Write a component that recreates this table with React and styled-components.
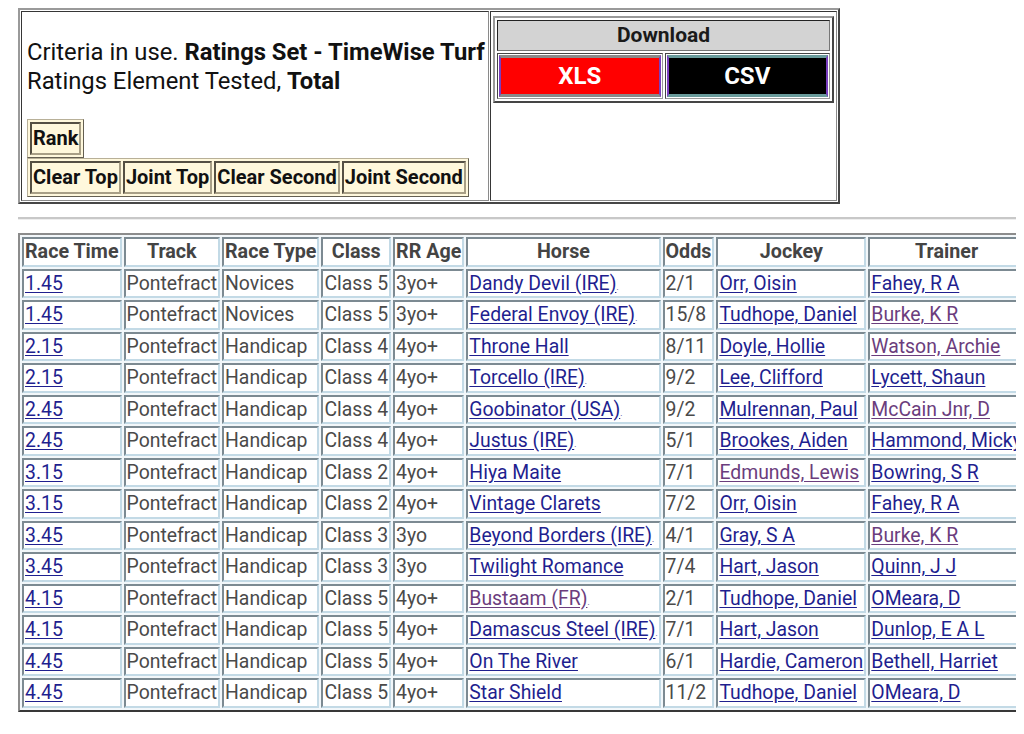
import React from "react";
import styled, { createGlobalStyle } from "styled-components";

const GlobalStyle = createGlobalStyle`
  html { overflow: hidden; }
  body {
    margin: 8px;
    background: #ffffff;
    font-family: Roboto, "Liberation Sans", sans-serif;
    font-size: 20px;
    color: #222;
  }
`;

const Page = styled.div`
  padding-left: 10px;
`;

const TopTable = styled.table`
  border: 2px outset #9a9a9a;
  border-spacing: 1px;
  width: 822px;
`;

const TopCell = styled.td`
  border: 1px inset #8a8a8a;
  vertical-align: top;
  padding: ${(p) => p.$pad || "0"};
  width: ${(p) => p.$w || "auto"};
  height: 190px;
  box-sizing: border-box;
`;

const Criteria = styled.div`
  font-size: 23.8px;
  line-height: 29px;
  white-space: nowrap;
  color: #111;
  padding-top: 26px;
  padding-bottom: 23px;
`;

const BtnTable = styled.table`
  border: 1px outset #b8b098;
  border-spacing: 2px;
  background: #fff8dc;
`;

const BtnCell = styled.td`
  border: 2px inset #a89f86;
  background: #fff8dc;
  font-weight: 700;
  color: #111;
  padding: 3px 1px;
  white-space: nowrap;
  line-height: 23px;
`;

const DlTable = styled.table`
  border: 2px outset #999;
  border-spacing: 2px;
  width: 100%;
  margin: 2px 0 0 0;
`;

const DlHead = styled.td`
  background: #d3d3d3;
  border: 1px inset #777;
  text-align: center;
  font-weight: 700;
  font-size: 21px;
  color: #1a1a1a;
  line-height: 29px;
  padding: 0;
`;

const DlCellWrap = styled.td`
  border: 1px inset #999;
  padding: 1px;
  width: 50%;
`;

const DlButton = styled.div`
  background: ${(p) => p.$bg};
  color: #ffffff;
  font-weight: 700;
  font-size: 24px;
  text-align: center;
  line-height: 36px;
  border-style: solid;
  border-width: 3px 2px;
  border-color: ${(p) => p.$edge} #7a3fbf;
`;

const Rule = styled.div`
  height: 0;
  width: 1100px;
  border-top: 2px solid #c8c8c8;
  border-bottom: 1px solid #eeeeee;
  margin: 13px 0 13px 0;
`;

const DataTable = styled.table`
  border: 2px outset #8c8c8c;
  border-spacing: 2px;
  background: #f2f7fa;
  font-size: 19.4px;
`;

const Th = styled.th`
  border: 2px inset #c3dae6;
  background: #ffffff;
  color: #444;
  font-weight: 700;
  font-size: 19.7px;
  text-align: center;
  padding: 1px 1px;
  white-space: nowrap;
  line-height: 23.5px;
`;

const Td = styled.td`
  border: 2px inset #c3dae6;
  background: #ffffff;
  color: #4a4a4a;
  text-align: left;
  padding: 1px;
  white-space: nowrap;
  line-height: 23.5px;
`;

const Link = styled.a`
  color: ${(p) => (p.$visited ? "#6b3d7d" : "#1f1f8f")};
  text-decoration: underline;
  text-underline-offset: 2px;
`;

const Dot = styled.span`
  font-size: 8px;
  line-height: 0;
  color: #1f1f8f;
`;

const rows = [
  ["1.45", "Novices", "Class 5", "3yo+", "Dandy Devil (IRE)", 0, "2/1", "Orr, Oisin", 0, "Fahey, R A", 0],
  ["1.45", "Novices", "Class 5", "3yo+", "Federal Envoy (IRE)", 0, "15/8", "Tudhope, Daniel", 0, "Burke, K R", 1],
  ["2.15", "Handicap", "Class 4", "4yo+", "Throne Hall", 0, "8/11", "Doyle, Hollie", 0, "Watson, Archie", 1],
  ["2.15", "Handicap", "Class 4", "4yo+", "Torcello (IRE)", 0, "9/2", "Lee, Clifford", 0, "Lycett, Shaun", 0],
  ["2.45", "Handicap", "Class 4", "4yo+", "Goobinator (USA)", 0, "9/2", "Mulrennan, Paul", 0, "McCain Jnr, D", 1],
  ["2.45", "Handicap", "Class 4", "4yo+", "Justus (IRE)", 0, "5/1", "Brookes, Aiden", 0, "Hammond, Micky", 0],
  ["3.15", "Handicap", "Class 2", "4yo+", "Hiya Maite", 0, "7/1", "Edmunds, Lewis", 1, "Bowring, S R", 0],
  ["3.15", "Handicap", "Class 2", "4yo+", "Vintage Clarets", 0, "7/2", "Orr, Oisin", 0, "Fahey, R A", 0],
  ["3.45", "Handicap", "Class 3", "3yo", "Beyond Borders (IRE)", 0, "4/1", "Gray, S A", 0, "Burke, K R", 1],
  ["3.45", "Handicap", "Class 3", "3yo", "Twilight Romance", 0, "7/4", "Hart, Jason", 0, "Quinn, J J", 0],
  ["4.15", "Handicap", "Class 5", "4yo+", "Bustaam (FR)", 1, "2/1", "Tudhope, Daniel", 0, "OMeara, D", 0],
  ["4.15", "Handicap", "Class 5", "4yo+", "Damascus Steel (IRE)", 0, "7/1", "Hart, Jason", 0, "Dunlop, E A L", 0],
  ["4.45", "Handicap", "Class 5", "4yo+", "On The River", 0, "6/1", "Hardie, Cameron", 0, "Bethell, Harriet", 0],
  ["4.45", "Handicap", "Class 5", "4yo+", "Star Shield", 0, "11/2", "Tudhope, Daniel", 0, "OMeara, D", 0],
];

const headers = ["Race Time", "Track", "Race Type", "Class", "RR Age", "Horse", "Odds", "Jockey", "Trainer"];

export default function App() {
  return (
    <>
      <GlobalStyle />
      <Page>
        <TopTable>
          <tbody>
            <tr>
              <TopCell $pad="0 1px 0 5px">
                <Criteria>
                  Criteria in use. <b>Ratings Set - TimeWise Turf</b>
                  <br />
                  Ratings Element Tested, <b>Total</b>
                </Criteria>
                <BtnTable>
                  <tbody>
                    <tr>
                      <BtnCell>Rank</BtnCell>
                    </tr>
                  </tbody>
                </BtnTable>
                <BtnTable>
                  <tbody>
                    <tr>
                      <BtnCell>Clear Top</BtnCell>
                      <BtnCell>Joint Top</BtnCell>
                      <BtnCell>Clear Second</BtnCell>
                      <BtnCell>Joint Second</BtnCell>
                    </tr>
                  </tbody>
                </BtnTable>
              </TopCell>
              <TopCell $w="347px" $pad="2px 2px">
                <DlTable>
                  <tbody>
                    <tr>
                      <DlHead colSpan={2}>Download</DlHead>
                    </tr>
                    <tr>
                      <DlCellWrap>
                        <DlButton $bg="#ff0000" $edge="#8a8a8a">XLS</DlButton>
                      </DlCellWrap>
                      <DlCellWrap>
                        <DlButton $bg="#000000" $edge="#6a9c9c">CSV</DlButton>
                      </DlCellWrap>
                    </tr>
                  </tbody>
                </DlTable>
              </TopCell>
            </tr>
          </tbody>
        </TopTable>
        <Rule />
        <DataTable>
          <thead>
            <tr>
              {headers.map((h) => (
                <Th key={h}>{h}</Th>
              ))}
            </tr>
          </thead>
          <tbody>
            {rows.map((r, i) => {
              const [time, type, cls, age, horse, hv, odds, jockey, jv, trainer, tv] = r;
              const suffix = /\)$/.test(horse);
              return (
                <tr key={i}>
                  <Td>
                    <Link href="#">{time}</Link>
                  </Td>
                  <Td>Pontefract</Td>
                  <Td>{type}</Td>
                  <Td>{cls}</Td>
                  <Td>{age}</Td>
                  <Td>
                    <Link href="#" $visited={!!hv}>{horse}</Link>
                    {suffix && <Dot>.</Dot>}
                  </Td>
                  <Td>{odds}</Td>
                  <Td>
                    <Link href="#" $visited={!!jv}>{jockey}</Link>
                  </Td>
                  <Td>
                    <Link href="#" $visited={!!tv}>{trainer}</Link>
                  </Td>
                </tr>
              );
            })}
          </tbody>
        </DataTable>
      </Page>
    </>
  );
}
